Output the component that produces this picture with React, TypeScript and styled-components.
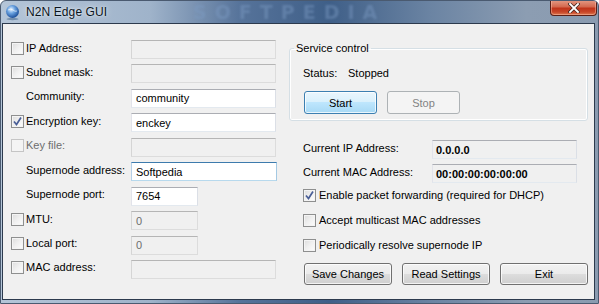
import styled, { createGlobalStyle } from 'styled-components';

const Global = createGlobalStyle`
  html, body {
    margin: 0;
    padding: 0;
    background: #ffffff;
  }
  body {
    font-family: "Liberation Sans", Arial, sans-serif;
    font-size: 11px;
    color: #000;
  }
`;

const Window = styled.div`
  width: 599px;
  height: 304px;
  display: flex;
  flex-direction: column;
  box-sizing: border-box;
  border: 1px solid #4a5a70;
  border-radius: 6px 6px 0 0;
  background: linear-gradient(90deg, #b4c5d8 0%, #9fb3ca 25%, #56739a 40%, #3f5f88 55%, #6b84a3 72%, #8c9db2 88%, #8a9bb0 100%);
  overflow: hidden;
  position: relative;
`;

const TitleBar = styled.div`
  height: 22px;
  display: flex;
  align-items: center;
  gap: 5px;
  padding-left: 3px;
  position: relative;
  flex-shrink: 0;
`;

const Title = styled.span`
  font-size: 12px;
  color: #0a1420;
  text-shadow: 0 0 6px rgba(255, 255, 255, 0.8), 0 0 2px rgba(255, 255, 255, 0.7);
  letter-spacing: 0.1px;
`;

const Watermark = styled.span`
  position: absolute;
  left: 192px;
  top: 0;
  height: 22px;
  font-family: "DejaVu Sans", sans-serif;
  font-weight: bold;
  font-size: 19px;
  line-height: 22px;
  letter-spacing: 8px;
  color: rgba(125, 155, 195, 0.45);
  filter: blur(1px);
  pointer-events: none;
`;

const CloseButton = styled.div`
  position: absolute;
  right: 1px;
  top: -1px;
  width: 47px;
  height: 16px;
  box-sizing: border-box;
  border: 1px solid #5a1f16;
  border-top: none;
  border-radius: 0 0 4px 4px;
  background: linear-gradient(180deg, #e59c86 0%, #d4694f 45%, #c0341a 55%, #c84628 80%, #de7a52 100%);
  box-shadow: inset 0 0 0 1px rgba(255, 200, 180, 0.45);
  display: flex;
  align-items: center;
  justify-content: center;
`;

const Client = styled.div`
  flex: 1;
  margin: 0 3px 3px 1px;
  border: 1px solid #2c3a4d;
  background: #f0f0f0;
  display: grid;
  grid-template-columns: 286px 1fr;
`;

const LeftColumn = styled.div`
  padding: 16px 0 0 8px;
  display: grid;
  grid-auto-rows: 19px;
  row-gap: 5.44px;
  align-content: start;
`;

const FormRow = styled.div`
  display: grid;
  grid-template-columns: 13px 103px 1fr;
  column-gap: 2px;
  align-items: center;
`;

const Label = styled.span<{ $disabled?: boolean }>`
  color: ${(p) => (p.$disabled ? '#6d6d6d' : '#000')};
  white-space: nowrap;
  line-height: 13px;
  margin-top: -3px;
`;

const Input = styled.div<{ $w?: number; $state?: 'normal' | 'disabled' | 'focus' }>`
  width: ${(p) => p.$w ?? 145}px;
  height: 19px;
  box-sizing: border-box;
  padding: 0 4px;
  display: flex;
  align-items: center;
  border: 1px solid;
  border-color: ${(p) =>
    p.$state === 'focus'
      ? '#3d7bad #a4c9e3 #b7d9ed #b5cfe7'
      : p.$state === 'disabled'
      ? '#b5b5b5 #dcdcdc #dcdcdc #d5d5d5'
      : '#abadb3 #dbdfe6 #e3e9ef #e2e3ea'};
  background: ${(p) => (p.$state === 'disabled' ? '#f0f0f0' : '#fff')};
  color: ${(p) => (p.$state === 'disabled' ? '#6d6d6d' : '#000')};
  white-space: nowrap;
`;

const CheckBox = styled.span<{ $disabled?: boolean; $inline?: boolean }>`
  width: 13px;
  height: 13px;
  box-sizing: border-box;
  border: 1px solid ${(p) => (p.$disabled ? '#c5c5c5' : '#8e8f8f')};
  background: ${(p) =>
    p.$disabled
      ? '#f4f4f4'
      : 'linear-gradient(135deg, #dcdcdc 0%, #f0f0f0 50%, #fdfdfd 100%)'};
  box-shadow: inset 0 0 0 1px #f4f4f4;
  display: flex;
  align-items: center;
  justify-content: center;
  flex-shrink: 0;
  margin-top: ${(p) => (p.$inline ? 0 : -3)}px;
`;

const RightColumn = styled.div`
  padding: 0 8px 0 0;
  display: flex;
  flex-direction: column;
`;

const GroupBox = styled.fieldset`
  margin: 18px 0 0 0;
  padding: 0;
  border: 1px solid #d5dfe5;
  border-radius: 3px;
  box-shadow: inset 0 0 0 1px #ffffff;
  min-width: 0;
`;

const Legend = styled.legend`
  margin-left: 4px;
  padding: 0 2px;
  line-height: 13px;
`;

const GroupBody = styled.div`
  padding: 12px 0 6px 13px;
  display: flex;
  flex-direction: column;
  gap: 11px;
`;

const StatusRow = styled.div`
  display: grid;
  grid-template-columns: 45px auto;
  line-height: 13px;
`;

const ButtonRow = styled.div<{ $gap: number; $indent: number }>`
  display: flex;
  gap: ${(p) => p.$gap}px;
  padding-left: ${(p) => p.$indent}px;
`;

const Button = styled.div<{ $w: number; $h: number; $variant?: 'default' | 'disabled' }>`
  width: ${(p) => p.$w}px;
  height: ${(p) => p.$h}px;
  box-sizing: border-box;
  border-radius: 3px;
  display: flex;
  align-items: center;
  justify-content: center;
  border: 1px solid
    ${(p) => (p.$variant === 'default' ? '#3c7fb1' : p.$variant === 'disabled' ? '#adb2b5' : '#707070')};
  color: ${(p) => (p.$variant === 'disabled' ? '#838383' : '#000')};
  background: ${(p) =>
    p.$variant === 'default'
      ? 'linear-gradient(180deg, #eaf6fd 0%, #d9f0fc 49%, #bee6fd 50%, #a7d9f5 100%)'
      : p.$variant === 'disabled'
      ? '#f4f4f4'
      : 'linear-gradient(180deg, #f2f2f2 0%, #ebebeb 49%, #dddddd 50%, #cfcfcf 100%)'};
  box-shadow: inset 0 0 0 1px
    ${(p) => (p.$variant === 'disabled' ? '#f4f4f4' : 'rgba(255, 255, 255, 0.75)')};
`;

const InfoList = styled.div`
  margin-top: 19px;
  display: flex;
  flex-direction: column;
  gap: 5px;
`;

const InfoRow = styled.div`
  display: grid;
  grid-template-columns: 129px 145px;
  align-items: center;
  padding-left: 14px;
`;

const ReadOnly = styled.div`
  height: 19px;
  box-sizing: border-box;
  border: 1px solid;
  border-color: #abadb3 #dbdfe6 #e3e9ef #e2e3ea;
  background: #f0f0f0;
  font-weight: bold;
  display: flex;
  align-items: center;
  padding: 1px 0 0 3px;
`;

const OptionList = styled.div`
  margin-top: 3px;
  margin-bottom: 8px;
  display: flex;
  flex-direction: column;
  gap: 6px;
`;

const CheckRow = styled.div`
  height: 19px;
  display: flex;
  align-items: center;
  gap: 3px;
  padding-left: 14px;
  line-height: 13px;
`;

const Globe = () => (
  <svg width="17" height="17" viewBox="0 0 17 17">
    <defs>
      <radialGradient id="g" cx="40%" cy="35%" r="65%">
        <stop offset="0%" stopColor="#e8f3ff" />
        <stop offset="45%" stopColor="#6aa2e0" />
        <stop offset="100%" stopColor="#1c4f9a" />
      </radialGradient>
    </defs>
    <circle cx="8.5" cy="7.5" r="6.5" fill="url(#g)" />
    <path d="M4 6 Q7 4 9 6 T13 7" stroke="#ffffff" strokeOpacity="0.6" fill="none" strokeWidth="1" />
    <ellipse cx="8.5" cy="15" rx="6" ry="1.2" fill="#4a6a90" opacity="0.6" />
  </svg>
);

const Check = () => (
  <svg width="9" height="9" viewBox="0 0 9 9">
    <path d="M1 4.5 L3.5 7.5 L8 0.5" stroke="#4a5f97" strokeWidth="1.7" fill="none" />
  </svg>
);

const CloseX = () => (
  <svg width="12" height="10" viewBox="0 0 12 10">
    <path d="M2 1 L10 9 M10 1 L2 9" stroke="#4a2a24" strokeWidth="3.4" strokeLinecap="square" />
    <path d="M2 1 L10 9 M10 1 L2 9" stroke="#ffffff" strokeWidth="1.8" strokeLinecap="square" />
  </svg>
);

type Field = {
  label: string;
  check?: boolean;
  checked?: boolean;
  disabled?: boolean;
  value?: string;
  width?: number;
  state?: 'normal' | 'disabled' | 'focus';
};

const fields: Field[] = [
  { label: 'IP Address:', check: true, state: 'disabled' },
  { label: 'Subnet mask:', check: true, state: 'disabled' },
  { label: 'Community:', value: 'community' },
  { label: 'Encryption key:', check: true, checked: true, value: 'enckey' },
  { label: 'Key file:', check: true, disabled: true, state: 'disabled' },
  { label: 'Supernode address:', value: 'Softpedia', state: 'focus', width: 146 },
  { label: 'Supernode port:', value: '7654', width: 67 },
  { label: 'MTU:', check: true, value: '0', width: 67, state: 'disabled' },
  { label: 'Local port:', check: true, value: '0', width: 67, state: 'disabled' },
  { label: 'MAC address:', check: true, state: 'disabled' },
];

const options = [
  { label: 'Enable packet forwarding (required for DHCP)', checked: true },
  { label: 'Accept multicast MAC addresses', checked: false },
  { label: 'Periodically resolve supernode IP', checked: false },
];

export default function App() {
  return (
    <Window>
      <Global />
      <TitleBar>
        <Globe />
        <Title>N2N Edge GUI</Title>
        <Watermark>SOFTPEDIA</Watermark>
        <CloseButton>
          <CloseX />
        </CloseButton>
      </TitleBar>
      <Client>
        <LeftColumn>
          {fields.map((f) => (
            <FormRow key={f.label}>
              {f.check ? (
                <CheckBox $disabled={f.disabled}>{f.checked && <Check />}</CheckBox>
              ) : (
                <span />
              )}
              <Label $disabled={f.disabled}>{f.label}</Label>
              <Input $w={f.width} $state={f.state ?? 'normal'}>
                {f.value}
              </Input>
            </FormRow>
          ))}
        </LeftColumn>
        <RightColumn>
          <GroupBox>
            <Legend>Service control</Legend>
            <GroupBody>
              <StatusRow>
                <span>Status:</span>
                <span>Stopped</span>
              </StatusRow>
              <ButtonRow $gap={10} $indent={1}>
                <Button $w={73} $h={23} $variant="default">Start</Button>
                <Button $w={73} $h={23} $variant="disabled">Stop</Button>
              </ButtonRow>
            </GroupBody>
          </GroupBox>
          <InfoList>
            <InfoRow>
              <Label>Current IP Address:</Label>
              <ReadOnly>0.0.0.0</ReadOnly>
            </InfoRow>
            <InfoRow>
              <Label>Current MAC Address:</Label>
              <ReadOnly>00:00:00:00:00:00</ReadOnly>
            </InfoRow>
          </InfoList>
          <OptionList>
            {options.map((o) => (
              <CheckRow key={o.label}>
                <CheckBox $inline>{o.checked && <Check />}</CheckBox>
                <span>{o.label}</span>
              </CheckRow>
            ))}
          </OptionList>
          <ButtonRow $gap={10} $indent={15}>
            <Button $w={88} $h={22}>Save Changes</Button>
            <Button $w={88} $h={22}>Read Settings</Button>
            <Button $w={88} $h={22}>Exit</Button>
          </ButtonRow>
        </RightColumn>
      </Client>
    </Window>
  );
}
